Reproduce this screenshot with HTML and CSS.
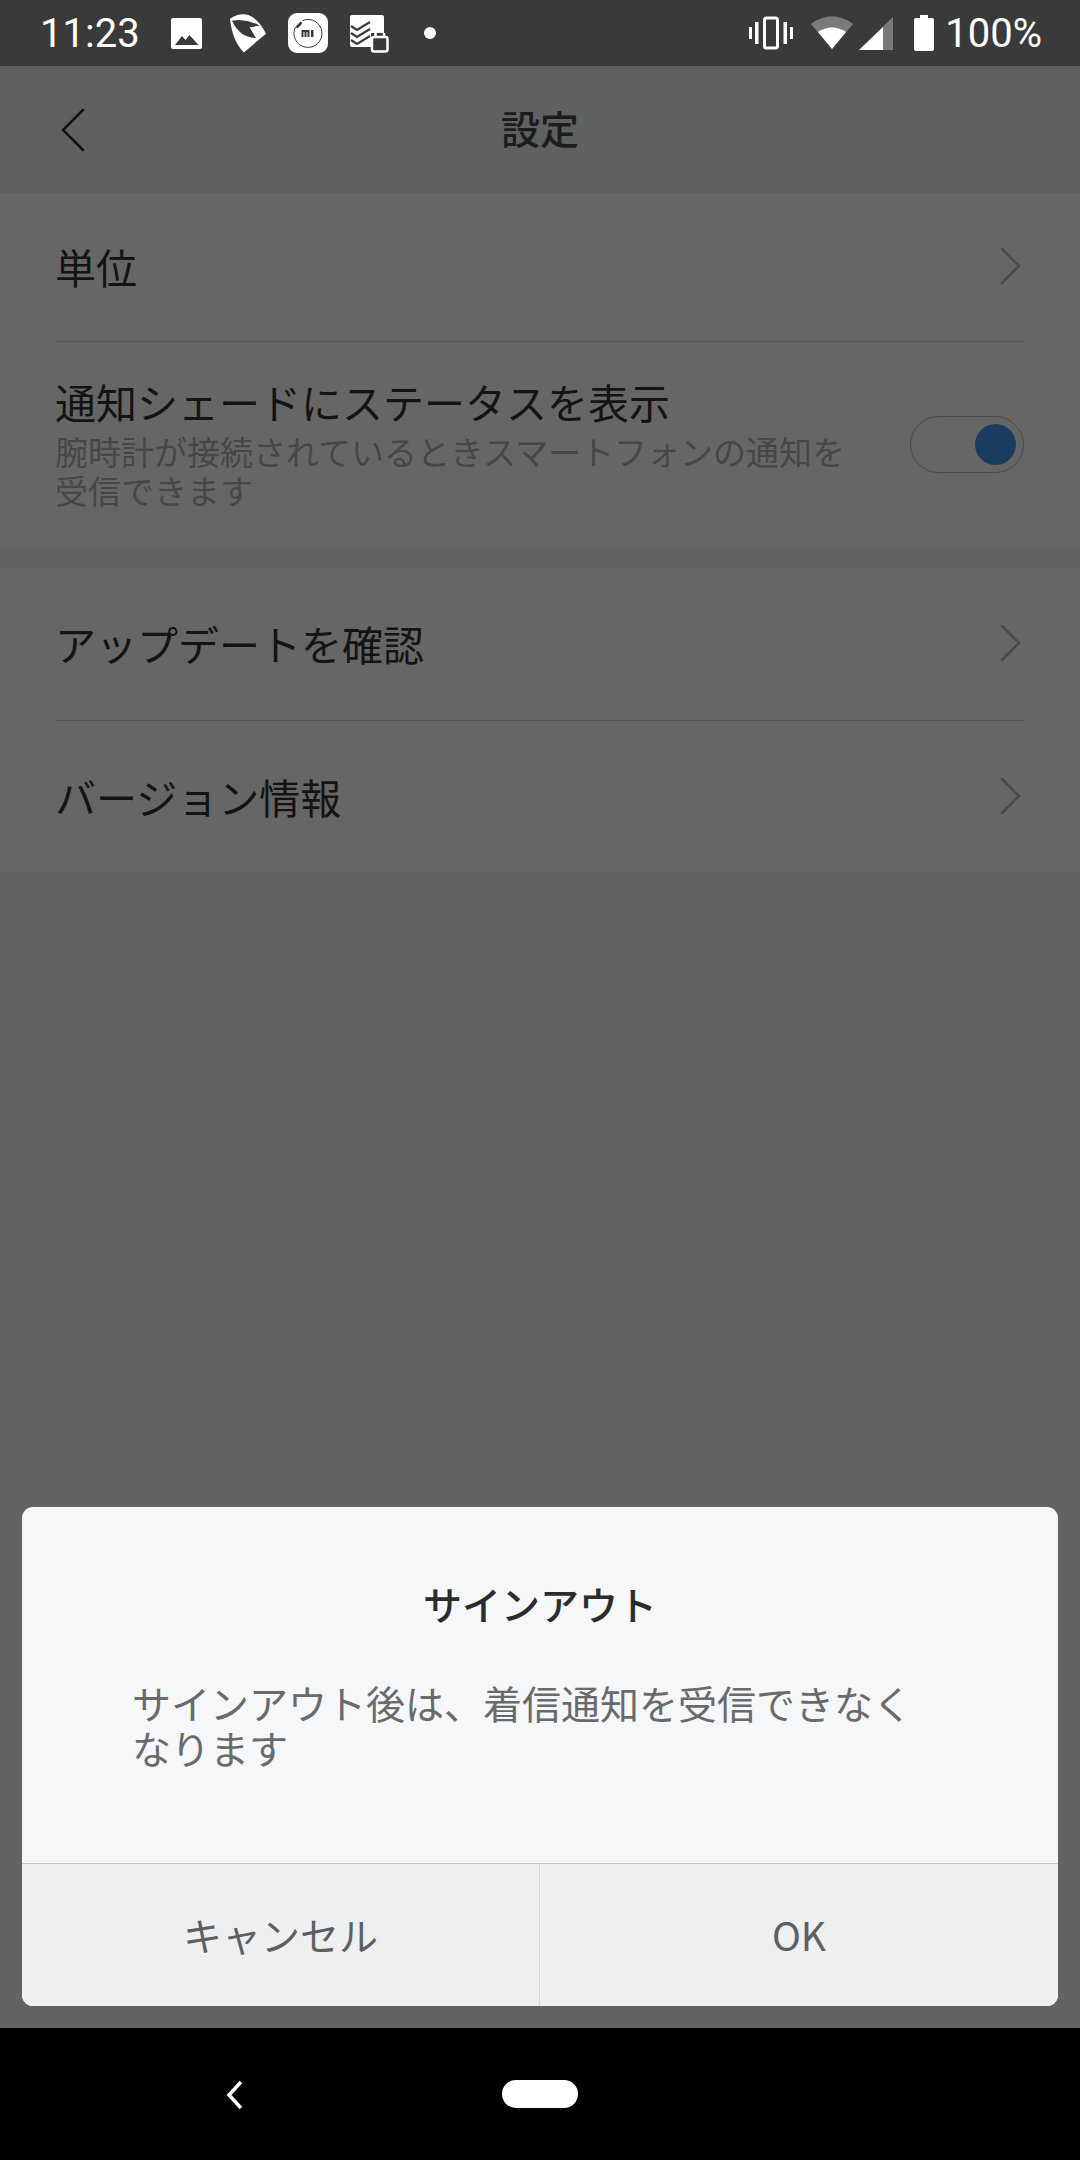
FILE: index.html
```html
<!DOCTYPE html>
<html lang="ja">
<head>
<meta charset="utf-8">
<title>設定</title>
<link rel="stylesheet" href="styles.css">
</head>
<body>
<div class="screen">
  <div class="status">
    <div class="status-left">
      <span class="clock">11:23</span>
      <svg class="ic ic-pic" width="31" height="31" viewBox="0 0 31 31"><rect x="0" y="0" width="31" height="31" rx="2" fill="#fff"/><path d="M4 27l7-9 3.500 4 4-5 9 10z" fill="#3a3a3a"/></svg>
      <svg class="ic ic-wing" width="37" height="40" viewBox="55 15 112 120"><path d="M58 32Q85 14 112 20 145 32 167 77L100 134Q65 100 58 32Z" fill="#fff"/><path d="M64 38Q105 30 148 52L118 58 137 90Q88 90 64 38Z" fill="#3a3a3a"/><path d="M118 58L163 80 137 90Z" fill="#fff"/></svg>
      <svg class="ic ic-mi" width="40" height="40" viewBox="0 0 40 40"><rect width="40" height="40" rx="9" fill="#fff"/><path d="M14.500 7.500A14 14 0 1 1 7.500 14" fill="none" stroke="#3a3a3a" stroke-width="1"/><path d="M8.500 14.500l5-5" stroke="#3a3a3a" stroke-width="2.500"/><path d="M13.500 17h8v7h-2v-5h-1v5h-2v-5h-1v5h-2zM23 17h2.500v7H23z" fill="#3a3a3a"/></svg>
      <svg class="ic ic-todo" width="39" height="38" viewBox="0 0 39 38"><path d="M2 0h30a2 2 0 0 1 2 2v16H21v14H2a2 2 0 0 1-2-2V2a2 2 0 0 1 2-2z" fill="#fff"/><path d="M1 11l6 4 13-8M1 18l6 4 13-8M1 25l6 4 13-8" fill="none" stroke="#3a3a3a" stroke-width="2.200"/><rect x="22" y="22" width="15.500" height="14.500" rx="2" fill="#3a3a3a" stroke="#fff" stroke-width="2.500"/><path d="M25.500 18v4M34 18v4" stroke="#fff" stroke-width="2.500"/></svg>
      <span class="dot"></span>
    </div>
    <div class="status-right">
      <svg width="44" height="34" viewBox="0 0 44 34"><rect x="15.500" y="2" width="13" height="30" rx="2" fill="none" stroke="#fff" stroke-width="3"/><path d="M0 11h3v12H0zM6 6h3.500v22H6zM34.500 6H38v22h-3.500zM41 11h3v12h-3z" fill="#fff"/></svg>
      <svg class="wifi" width="42" height="34" viewBox="0 0 42 34"><path d="M0 8C12-2 30-2 42 8L21 33Z" fill="#7a7a7a"/><path d="M7 16C15 10 27 10 35 16L21 33Z" fill="#fff"/></svg>
      <svg class="signal" width="34" height="34" viewBox="0 0 34 34"><path d="M0 33L34 0v33z" fill="#7a7a7a"/><path d="M0 33L24 10v23z" fill="#fff"/></svg>
      <svg class="batt" width="20" height="36" viewBox="0 0 20 36"><path d="M6 0h8v3h4a2 2 0 0 1 2 2v29a2 2 0 0 1-2 2H2a2 2 0 0 1-2-2V5a2 2 0 0 1 2-2h4z" fill="#fff"/></svg>
      <span class="pct">100%</span>
    </div>
  </div>

  <header class="head">
    <svg class="back" width="24" height="44" viewBox="0 0 24 44"><path d="M22 2L2 22l20 20" fill="none" stroke="#111" stroke-width="2.500" stroke-linecap="round"/></svg>
    <h1 class="head-title">設定</h1>
  </header>

  <section class="group">
    <div class="row row-first">
      <span class="row-title">単位</span>
      <svg class="chev" width="22" height="38" viewBox="0 0 22 38"><path d="M2 2l17 17L2 36" fill="none" stroke="#4a4a4a" stroke-width="2.500" stroke-linecap="round"/></svg>
    </div>
    <div class="row row-toggle">
      <div class="row-text">
        <div class="row-title">通知シェードにステータスを表示</div>
        <div class="row-sub">腕時計が接続されているときスマートフォンの通知を受信できます</div>
      </div>
      <div class="toggle"><span class="knob"></span></div>
    </div>
  </section>

  <section class="group group-second">
    <div class="row row-simple">
      <span class="row-title">アップデートを確認</span>
      <svg class="chev" width="22" height="38" viewBox="0 0 22 38"><path d="M2 2l17 17L2 36" fill="none" stroke="#4a4a4a" stroke-width="2.500" stroke-linecap="round"/></svg>
    </div>
    <div class="row row-simple">
      <span class="row-title">バージョン情報</span>
      <svg class="chev" width="22" height="38" viewBox="0 0 22 38"><path d="M2 2l17 17L2 36" fill="none" stroke="#4a4a4a" stroke-width="2.500" stroke-linecap="round"/></svg>
    </div>
  </section>

  <div class="spacer"></div>

  <div class="dialog">
    <div class="dialog-body">
      <h2 class="dialog-title">サインアウト</h2>
      <p class="dialog-msg">サインアウト後は、着信通知を受信できなくなります</p>
    </div>
    <div class="dialog-actions">
      <div class="btn btn-cancel">キャンセル</div>
      <div class="btn">OK</div>
    </div>
  </div>

  <nav class="nav">
    <svg class="nav-back" width="18" height="30" viewBox="0 0 18 30"><path d="M15 2L3 15l12 13" fill="none" stroke="#fff" stroke-width="3.500"/></svg>
    <span class="nav-home"></span>
  </nav>
</div>
</body>
</html>
```
FILE: styles.css
```css
* { box-sizing: border-box; }
html, body { margin: 0; padding: 0; }
body { background: #626463; font-family: "Noto Sans CJK JP", "Noto Sans", sans-serif; }
.screen { width: 1080px; height: 2160px; display: flex; flex-direction: column; background: #626463; overflow: hidden; }

.status { height: 66px; flex: none; background: #3a3a3a; display: flex; justify-content: space-between; align-items: center; padding: 0 38px 0 40px; color: #fff; font-family: Roboto, sans-serif; font-size: 40px; }
.status-left, .status-right { display: flex; align-items: center; }
.clock { width: 96px; }
.ic-pic { margin-left: 35px; }
.ic-wing { margin-left: 27px; }
.ic-mi { margin-left: 22px; }
.ic-todo { margin-left: 22px; margin-top: 2px; }
.dot { width: 12px; height: 12px; border-radius: 50%; background: #fff; margin-left: 35px; }
.status-right svg { display: block; }
.wifi { margin-left: 18px; }
.signal { margin-left: 6px; margin-top: 1px; }
.batt { margin-left: 21px; }
.pct { margin-left: 11px; }

.head { height: 127px; flex: none; background: #5f6160; position: relative; display: flex; align-items: center; justify-content: center; padding-bottom: 4px; }
.back { position: absolute; left: 61px; top: 42px; }
.head-title { margin: 0; font-size: 39px; font-weight: 500; line-height: 1; color: #1c1c1c; }

.group { background: #666; padding: 0 56px; }
.group-second { margin-top: 21px; }
.row { display: flex; align-items: center; justify-content: space-between; }
.row + .row { border-top: 1px solid #555; }
.row-first { height: 148px; padding-bottom: 3px; }
.row-simple { height: 152px; padding-bottom: 2px; }
.row-toggle { height: 206px; }
.row-title { font-size: 41px; line-height: 52px; color: #141414; margin-left: -1px; }
.row-sub { width: 800px; font-size: 33px; line-height: 39px; color: #474747; margin-top: 5px; margin-left: -1px; }
.row-text { display: flex; flex-direction: column; margin-top: -4px; }
.chev { margin-right: 2px; }
.toggle { width: 114px; height: 57px; border: 1.5px solid #4a4a4a; border-radius: 29px; display: flex; align-items: center; justify-content: flex-end; padding-right: 7px; }
.knob { width: 41px; height: 41px; border-radius: 50%; background: #1a3d5f; }

.spacer { flex: 1; }

.dialog { margin: 0 22px 22px; height: 499px; flex: none; display: flex; flex-direction: column; border-radius: 11px; overflow: hidden; background: #f6f7f9; }
.dialog-body { height: 356px; padding: 0 111px; flex: none; }
.dialog-title { margin: 71px 0 0; font-size: 39px; font-weight: 500; line-height: 50px; text-align: center; color: #2c2c2c; }
.dialog-msg { margin: 52px 0 0; font-size: 39px; line-height: 45px; color: #686a6c; margin-left: -1px; margin-right: -1px; }
.dialog-actions { flex: 1; display: flex; background: #eeeff1; border-top: 1px solid #c4c5c9; }
.btn { flex: 1; display: flex; align-items: center; justify-content: center; font-size: 39px; color: #5d5f61; padding-bottom: 2px; }
.btn-cancel { flex: none; width: 518px; border-right: 1px solid #d5d6d9; }

.nav { height: 132px; flex: none; background: #000; position: relative; display: flex; align-items: center; justify-content: center; }
.nav-back { position: absolute; left: 226px; top: 52px; }
.nav-home { width: 76px; height: 28px; border-radius: 14px; background: #fff; }
```
